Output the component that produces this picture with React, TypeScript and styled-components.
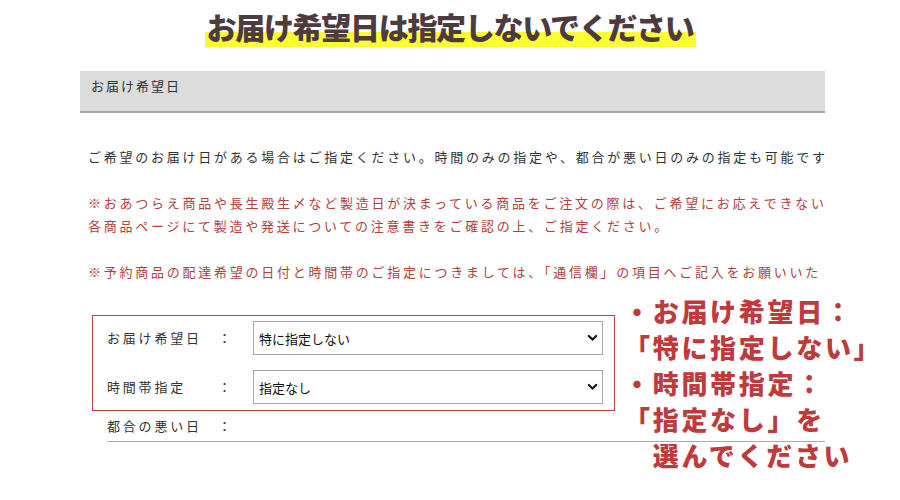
import React, { ReactElement } from 'react';
import styled, { createGlobalStyle } from 'styled-components';

const GlobalStyle = createGlobalStyle`
  body {
    margin: 0;
    background: #fff;
    font-family: "Noto Sans CJK JP", "Noto Sans", sans-serif;
    color: #333;
  }
`;

const Chevron = (): ReactElement => (
  <svg width="11" height="8" viewBox="0 0 11 8">
    <path d="M1.8 2 L5.5 5.5 L9.2 2" fill="none" stroke="#111" strokeWidth="2.2" strokeLinecap="round" />
  </svg>
);

function SelectField({ value }: { value: string }): ReactElement {
  return (
    <SelectWrap>
      <Select defaultValue={value}>
        <option>{value}</option>
      </Select>
      <ArrowIcon>
        <Chevron />
      </ArrowIcon>
    </SelectWrap>
  );
}

export default function App(): ReactElement {
  return (
    <Page>
      <GlobalStyle />
      <Heading>
        <Marker>お届け希望日は指定しないでください</Marker>
      </Heading>
      <Section>
        <SectionHeader>お届け希望日</SectionHeader>
        <Notes>
          <Line>ご希望のお届け日がある場合はご指定ください。時間のみの指定や、都合が悪い日のみの指定も可能です</Line>
          <Line $warn $gap>※おあつらえ商品や長生殿生〆など製造日が決まっている商品をご注文の際は、ご希望にお応えできない</Line>
          <Line $warn>各商品ページにて製造や発送についての注意書きをご確認の上、ご指定ください。</Line>
          <Line $warn $gap>※予約商品の配達希望の日付と時間帯のご指定につきましては、「通信欄」の項目へご記入をお願いいた</Line>
        </Notes>
        <FormBox>
          <FieldRow>
            <Label>お届け希望日</Label>
            <Colon>：</Colon>
            <SelectField value="特に指定しない" />
          </FieldRow>
          <FieldRow>
            <Label>時間帯指定</Label>
            <Colon>：</Colon>
            <SelectField value="指定なし" />
          </FieldRow>
        </FormBox>
        <PlainRow>
          <Label>都合の悪い日</Label>
          <Colon>：</Colon>
        </PlainRow>
      </Section>
      <Callout>
        <div>・お届け希望日：</div>
        <div>「特に指定しない」</div>
        <div>・時間帯指定：</div>
        <div>「指定なし」を</div>
        <div>　選んでください</div>
      </Callout>
    </Page>
  );
}

const Page = styled.div`
  position: relative;
  width: 900px;
  height: 500px;
  overflow: hidden;
`;

const Heading = styled.h1`
  margin: 0;
  padding-top: 7px;
  text-align: center;
  line-height: 41px;
  height: 41px;
`;

const Marker = styled.span`
  display: inline-block;
  vertical-align: top;
  height: 41px;
  line-height: 38px;
  padding: 0 2px;
  font-size: 30px;
  font-weight: 900;
  letter-spacing: -1.3px;
  color: #4d3b3f;
  background: linear-gradient(to bottom, transparent 25px, #fcfc35 25px, #fcfc35 40px, transparent 40px);
`;

const Section = styled.div`
  margin: 23px 0 0 80px;
  width: 745px;
`;

const SectionHeader = styled.div`
  height: 42px;
  box-sizing: border-box;
  padding: 5px 11px;
  background: #dcdcdc;
  border-bottom: 2px solid #a3a3a3;
  font-size: 13px;
  letter-spacing: 2px;
  line-height: 20px;
  color: #333;
`;

const Notes = styled.div`
  margin-top: 32px;
  padding-left: 8px;
  white-space: nowrap;
`;

const Line = styled.div<{ $warn?: boolean; $gap?: boolean }>`
  font-size: 13px;
  letter-spacing: 2.75px;
  line-height: 23px;
  color: ${({ $warn }) => ($warn ? '#b3403d' : '#333')};
  margin-top: ${({ $gap }) => ($gap ? '23px' : '0')};
`;

const FormBox = styled.div`
  margin: 32px 0 0 12px;
  width: 523px;
  box-sizing: border-box;
  border: 1px solid #b5433f;
  padding: 5px 11px 6px 14px;
  display: flex;
  flex-direction: column;
  gap: 15px;
`;

const FieldRow = styled.div`
  display: grid;
  grid-template-columns: 111px 35px 350px;
  align-items: center;
`;

const PlainRow = styled.div`
  display: grid;
  grid-template-columns: 111px 35px;
  align-items: center;
  margin-left: 27px;
  padding: 6px 0 6px;
  border-bottom: 1px solid #ababab;
`;

const Label = styled.div`
  font-size: 13px;
  letter-spacing: 2.8px;
  line-height: 18px;
  color: #333;
`;

const Colon = styled.div`
  font-size: 13px;
  line-height: 18px;
  color: #333;
`;

const SelectWrap = styled.div`
  position: relative;
  height: 34px;
`;

const Select = styled.select`
  appearance: none;
  width: 100%;
  height: 100%;
  box-sizing: border-box;
  border: 1px solid #a9a9a9;
  border-radius: 0;
  background: #fff;
  padding: 0 30px 0 5px;
  font-family: "Noto Sans CJK JP", sans-serif;
  font-size: 13px;
  color: #111;
  outline: none;
`;

const ArrowIcon = styled.span`
  position: absolute;
  right: 5px;
  top: 13px;
  display: flex;
  pointer-events: none;
`;

const Callout = styled.div`
  position: absolute;
  left: 624px;
  top: 293px;
  font-size: 26px;
  font-weight: 900;
  letter-spacing: 2.7px;
  line-height: 36px;
  color: #bf3a3d;
  white-space: nowrap;
`;
